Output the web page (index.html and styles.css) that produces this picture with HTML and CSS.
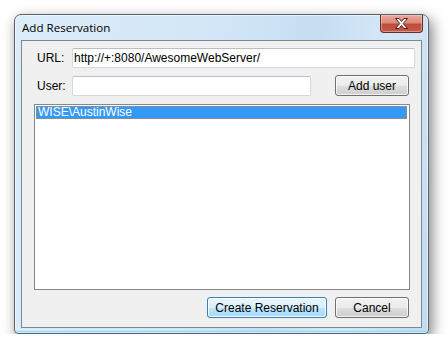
FILE: index.html
```html
<!DOCTYPE html>
<html lang="en">
<head>
    <meta charset="UTF-8">
    <title>Add Reservation</title>
    <link rel="stylesheet" href="styles.css">
</head>
<body>
    <div class="window">
        <div class="titlebar">
            <span class="title">Add Reservation</span>
            <button class="close" title="Close">
                <svg width="15" height="11" viewBox="0 0 15 11">
                    <path d="M1.5 0.5h3.5l2.5 3 2.5-3h3.5l-4.3 5 4.3 5h-3.5l-2.5-3-2.5 3h-3.5l4.3-5z" fill="#fff" stroke="#4a1f1a" stroke-width="1" stroke-linejoin="round"/>
                </svg>
            </button>
        </div>
        <div class="client">
            <div class="row url-row">
                <label for="url">URL:</label>
                <input type="text" id="url" class="textbox" value="http://+:8080/AwesomeWebServer/">
            </div>
            <div class="row user-row">
                <label for="user">User:</label>
                <input type="text" id="user" class="textbox user-box">
                <button class="btn add-user">Add user</button>
            </div>
            <div class="listbox">
                <div class="item selected">WISE\AustinWise</div>
            </div>
            <div class="actions">
                <button class="btn default">Create Reservation</button>
                <button class="btn">Cancel</button>
            </div>
        </div>
    </div>
</body>
</html>
```

FILE: styles.css
```css
body {
    margin: 0;
    background: #ffffff;
    font-family: 'Liberation Sans', Arial, sans-serif;
    font-size: 12px;
    color: #000;
}
.window {
    margin: 14px 0 0 14px;
    width: 415px;
    height: 320px;
    box-sizing: border-box;
    display: flex;
    flex-direction: column;
    padding: 0 6px 5px 6px;
    border: 1px solid #59636e;
    border-radius: 7px 7px 4px 4px;
    background: linear-gradient(100deg, #dcecf9 0%, #d2e6f7 45%, #c6ddf2 65%, #d4e7f7 80%, #c3dbf0 100%);
    box-shadow: inset 0 0 0 1px rgba(255, 255, 255, 0.55), inset 0 -2px 0 #8ed8f4, 3px 5px 14px rgba(0, 0, 0, 0.5);
}
.titlebar {
    height: 25px;
    display: flex;
    justify-content: space-between;
    align-items: flex-start;
}
.title {
    padding: 5px 0 0 1px;
    font-family: 'Open Sans', 'Noto Sans', sans-serif;
    font-size: 11.6px;
    line-height: 16px;
    color: #000;
}
.close {
    width: 43px;
    height: 18px;
    margin-right: -1px;
    padding: 0;
    display: flex;
    align-items: center;
    justify-content: center;
    border: 1px solid #6b2b22;
    border-top: none;
    border-radius: 0 0 4px 4px;
    background: linear-gradient(#e9a99a 0%, #dc8a78 45%, #c14b3b 55%, #c45a48 100%);
    box-shadow: inset 0 0 0 1px rgba(255, 220, 210, 0.45);
}
.client {
    flex: 1;
    border: 1px solid #7e8893;
    background: #f0f0f0;
    padding: 7px 11px 0 12px;
    display: flex;
    flex-direction: column;
}
.row {
    display: flex;
    align-items: center;
}
.row label {
    width: 35px;
    padding-left: 3px;
    flex-shrink: 0;
}
.url-row {
    margin-right: -5px;
}
.user-row {
    margin-top: 7px;
    height: 22px;
}
.textbox {
    height: 20px;
    box-sizing: border-box;
    padding: 0 1px;
    border: 1px solid #d3d8e0;
    border-top-color: #b9bec6;
    border-radius: 2px;
    background: #fff;
    font-family: inherit;
    font-size: 12px;
    color: #000;
    outline: none;
}
.url-row .textbox {
    flex: 1;
}
.user-box {
    width: 239px;
}
.btn {
    height: 21px;
    width: 74px;
    padding: 0;
    box-sizing: border-box;
    border: 1px solid #707070;
    border-radius: 3px;
    background: linear-gradient(#f2f2f2 0%, #ebebeb 50%, #dddddd 51%, #cfcfcf 100%);
    box-shadow: inset 0 0 0 1px rgba(255, 255, 255, 0.7);
    font-family: inherit;
    font-size: 12px;
    color: #000;
}
.add-user {
    margin-left: 24px;
    margin-top: -1px;
}
.listbox {
    margin-top: 7px;
    height: 186px;
    box-sizing: border-box;
    border: 1px solid #828790;
    background: #fff;
    padding: 1px;
}
.item {
    height: 13px;
    line-height: 13px;
    padding-left: 2px;
}
.selected {
    background: #3399ff;
    color: #fff;
    outline: 1px dotted #d9822b;
    outline-offset: -1px;
    margin-right: 1px;
}
.actions {
    margin-top: 7px;
    display: flex;
    justify-content: flex-end;
    gap: 8px;
    padding-right: 1px;
}
.default {
    width: 120px;
    border-color: #3c7fb1;
    background: linear-gradient(#eaf6fd 0%, #d9f0fc 50%, #bee6fd 51%, #a7d9f5 100%);
    box-shadow: inset 0 0 0 1px rgba(255, 255, 255, 0.8);
}
```
